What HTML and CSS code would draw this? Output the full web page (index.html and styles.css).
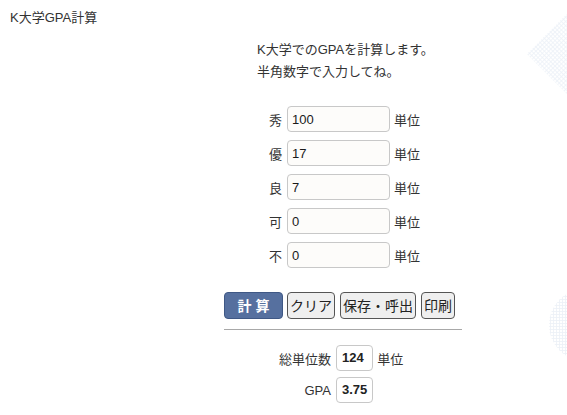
FILE: index.html
```html
<!DOCTYPE html>
<html lang="ja">
<head>
<meta charset="utf-8">
<title>K大学GPA計算</title>
<link rel="stylesheet" href="styles.css">
</head>
<body>
<div class="bg">
  <div class="deco deco-diamond"></div>
  <div class="deco deco-circle"></div>
</div>
<header class="title">K大学GPA計算</header>
<main class="main">
  <div class="intro">
    <p>K大学でのGPAを計算します。</p>
    <p>半角数字で入力してね。</p>
  </div>
  <form class="form">
    <div class="row"><label class="lbl">秀</label><input class="num" type="text" value="100"><span class="unit">単位</span></div>
    <div class="row"><label class="lbl">優</label><input class="num" type="text" value="17"><span class="unit">単位</span></div>
    <div class="row"><label class="lbl">良</label><input class="num" type="text" value="7"><span class="unit">単位</span></div>
    <div class="row"><label class="lbl">可</label><input class="num" type="text" value="0"><span class="unit">単位</span></div>
    <div class="row"><label class="lbl">不</label><input class="num" type="text" value="0"><span class="unit">単位</span></div>
  </form>
  <div class="buttons">
    <button class="btn btn-primary" type="button">計 算</button>
    <button class="btn" type="button">クリア</button>
    <button class="btn" type="button">保存・呼出</button>
    <button class="btn" type="button">印刷</button>
  </div>
  <hr class="rule">
  <div class="results">
    <span class="rlabel">総単位数</span><span class="rbox">124</span><span class="runit">単位</span>
    <span class="rlabel">GPA</span><span class="rbox">3.75</span><span></span>
  </div>
</main>
</body>
</html>
```
FILE: styles.css
```css
html, body {
  margin: 0;
  padding: 0;
  background: #fff;
  overflow: hidden;
}
body {
  font-family: "Liberation Sans", "Noto Sans CJK JP", sans-serif;
  font-size: 13px;
  color: #333;
  position: relative;
  height: 415px;
}
.bg {
  position: absolute;
  left: 0;
  top: 0;
  right: 0;
  bottom: 0;
  overflow: hidden;
}
.deco {
  position: absolute;
  background-image: radial-gradient(circle, #e6ecf5 45%, transparent 60%);
  background-size: 3px 3px;
  opacity: 0.7;
}
.deco-diamond {
  width: 64px;
  height: 64px;
  left: 540px;
  top: 22px;
  transform: rotate(45deg);
}
.deco-circle {
  width: 72px;
  height: 72px;
  left: 549px;
  top: 289px;
  border-radius: 50%;
}
.title {
  padding: 9px 0 0 10px;
  height: 20px;
  line-height: 17px;
  position: relative;
}
.main {
  position: relative;
  margin-left: 224px;
  width: 238px;
}
.intro {
  padding: 10px 0 0 33px;
}
.intro p {
  margin: 0;
  line-height: 22px;
}
.form {
  margin-top: 23px;
  display: flex;
  flex-direction: column;
  align-items: center;
  gap: 8px;
}
.row {
  display: flex;
  align-items: center;
  gap: 5px;
  padding-left: 2px;
}
.lbl {
  width: 14px;
  text-align: right;
}
.num {
  box-sizing: border-box;
  width: 103px;
  height: 26px;
  margin: 0;
  padding: 0 4px;
  border: 1px solid #c8c8c8;
  border-radius: 4px;
  background: #fdfcfa;
  font-family: "Liberation Sans", sans-serif;
  font-size: 13px;
  color: #1a1a1a;
}
.unit {
  margin-left: -1px;
}
.buttons {
  margin-top: 24px;
  display: flex;
  gap: 5px;
}
.btn {
  box-sizing: border-box;
  height: 27px;
  margin: 0;
  padding: 0 2px;
  border: 1px solid #555;
  border-radius: 4px;
  background: #efefef;
  font-family: "Liberation Sans", "Noto Sans CJK JP", sans-serif;
  font-size: 14px;
  color: #222;
  line-height: 1;
}
.btn-primary {
  width: 59px;
  margin-right: -1px;
  background: #56709f;
  border-color: #3f5885;
  color: #fff;
  font-weight: bold;
}
.rule {
  margin: 10px 0 0 0;
  border: 0;
  border-top: 1px solid #a8a8a8;
  height: 0;
}
.results {
  margin-top: 15px;
  display: grid;
  grid-template-columns: 107px auto 1fr;
  column-gap: 5px;
  row-gap: 6px;
  align-items: center;
}
.rlabel {
  text-align: right;
}
.rbox {
  box-sizing: border-box;
  height: 26px;
  line-height: 24px;
  padding: 0 5px;
  border: 1px solid #c8c8c8;
  border-radius: 4px;
  font-weight: bold;
  color: #222;
}
.runit {
  margin-left: -1px;
}
```
